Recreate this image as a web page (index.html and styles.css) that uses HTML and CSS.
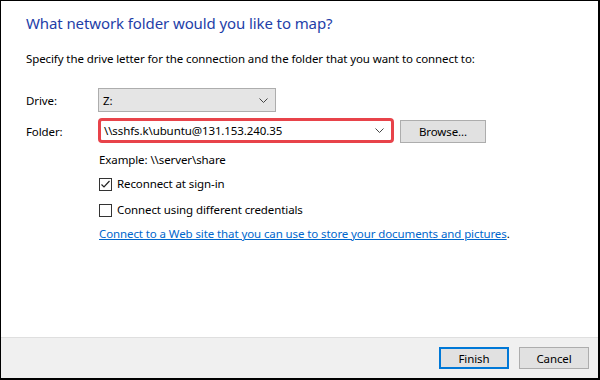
FILE: index.html
```html
<!DOCTYPE html>
<html>
<head>
<meta charset="utf-8">
<link rel="stylesheet" href="styles.css">
</head>
<body>
<div class="dialog">
  <div class="content">
    <h1 class="title">What network folder would you like to map?</h1>
    <p class="intro">Specify the drive letter for the connection and the folder that you want to connect to:</p>
    <div class="form">
      <div class="label drive-label">Drive:</div>
      <div class="select drive">
        <span class="value">Z:</span>
        <svg class="chev" width="9" height="5" viewBox="0 0 9 5"><polyline points="0.5,0.5 4.5,4.5 8.5,0.5" fill="none" stroke="#444" stroke-width="1"/></svg>
      </div>
      <div class="spacer"></div>
      <div class="label folder-label">Folder:</div>
      <div class="select folder">
        <span class="value">\\sshfs.k\ubuntu@131.153.240.35</span>
        <svg class="chev" width="9" height="5" viewBox="0 0 9 5"><polyline points="0.5,0.5 4.5,4.5 8.5,0.5" fill="none" stroke="#444" stroke-width="1"/></svg>
      </div>
      <button class="btn browse">Browse...</button>
    </div>
    <div class="options">
      <div class="example">Example: \\server\share</div>
      <label class="check">
        <span class="box"><svg width="11" height="11" viewBox="0 0 11 11"><polyline points="1.5,5.5 4,8 9.5,2" fill="none" stroke="#222" stroke-width="1.2"/></svg></span>
        <span>Reconnect at sign-in</span>
      </label>
      <label class="check">
        <span class="box"></span>
        <span>Connect using different credentials</span>
      </label>
      <div class="linkline"><a class="link" href="#">Connect to a Web site that you can use to store your documents and pictures</a>.</div>
    </div>
  </div>
  <div class="footer">
    <button class="btn finish">Finish</button>
    <button class="btn cancel">Cancel</button>
  </div>
</div>
</body>
</html>
```
FILE: styles.css
```css
* { box-sizing: border-box; }
html, body { margin: 0; padding: 0; background: #fff; }
.dialog {
  width: 600px;
  height: 380px;
  border-style: solid;
  border-color: #000;
  border-width: 1px 2px 2px 1px;
  display: flex;
  flex-direction: column;
  font-family: "Noto Sans", "DejaVu Sans", sans-serif;
  font-size: 11.5px;
  letter-spacing: -0.1px;
  color: #000;
  background: #fff;
}
.content {
  flex: 1;
  padding: 12px 0 0 25px;
}
.title {
  margin: 0;
  font-weight: normal;
  font-size: 15px;
  letter-spacing: -0.1px;
  line-height: 20px;
  color: #1e3ea8;
}
.intro {
  margin: 18px 0 0 0;
  line-height: 16px;
}
.form {
  margin-top: 21px;
  display: grid;
  grid-template-columns: 72px auto 1fr;
  grid-template-rows: 24px 25px;
  row-gap: 6px;
  align-items: center;
}
.label { line-height: 16px; padding-top: 2px; }
.select {
  display: flex;
  align-items: center;
  justify-content: space-between;
  height: 100%;
}
.drive {
  width: 178px;
  background: #e5e5e5;
  border: 1px solid #adadad;
  padding: 0 7px 0 4px;
}
.folder {
  width: 296px;
  background: #fff;
  border: 3px solid #e8434a;
  border-radius: 4px;
  padding: 0 7px 0 3px;
}
.chev { display: block; }
.btn {
  font-family: inherit;
  font-size: 11.5px;
  letter-spacing: -0.1px;
  color: #000;
  background: #e1e1e1;
  border: 1px solid #adadad;
  padding: 0;
  margin: 0;
}
.browse {
  justify-self: start;
  align-self: end;
  margin-left: 6px;
  width: 86px;
  height: 23px;
}
.options {
  padding-left: 73px;
  margin-top: 9px;
}
.example { line-height: 16px; }
.check {
  display: flex;
  align-items: center;
  gap: 5px;
  height: 16px;
  line-height: 16px;
  margin-top: 8px;
}
.check + .check { margin-top: 10px; }
.box {
  width: 13px;
  height: 13px;
  border: 1px solid #333;
  background: #fff;
  display: flex;
  align-items: center;
  justify-content: center;
}
.box svg { display: block; }
.linkline {
  margin-top: 8px;
  line-height: 16px;
}
.link { color: #0066cc; text-decoration: underline; }
.footer {
  height: 41px;
  border-top: 1px solid #dfdfdf;
  background: #f0f0f0;
  display: flex;
  justify-content: flex-end;
  align-items: flex-start;
  gap: 10px;
  padding: 9px 9px 0 0;
}
.finish, .cancel { width: 70px; height: 22px; }
.finish { border: 2px solid #0078d7; }
```
